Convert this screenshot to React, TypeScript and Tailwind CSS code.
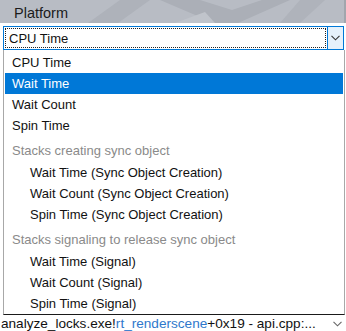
import React from "react";

type Row = { label: string; kind: "item" | "header"; indent?: boolean; selected?: boolean };

const rows: Row[] = [
  { label: "CPU Time", kind: "item" },
  { label: "Wait Time", kind: "item", selected: true },
  { label: "Wait Count", kind: "item" },
  { label: "Spin Time", kind: "item" },
  { label: "Stacks creating sync object", kind: "header" },
  { label: "Wait Time (Sync Object Creation)", kind: "item", indent: true },
  { label: "Wait Count (Sync Object Creation)", kind: "item", indent: true },
  { label: "Spin Time (Sync Object Creation)", kind: "item", indent: true },
  { label: "Stacks signaling to release sync object", kind: "header" },
  { label: "Wait Time (Signal)", kind: "item", indent: true },
  { label: "Wait Count (Signal)", kind: "item", indent: true },
  { label: "Spin Time (Signal)", kind: "item", indent: true },
];

function Chevron({ color = "#444" }: { color?: string }) {
  return (
    <svg width="9" height="6" viewBox="0 0 9 6" fill="none">
      <path d="M0.5 0.8 L4.5 4.8 L8.5 0.8" stroke={color} strokeWidth="1.1" />
    </svg>
  );
}

export default function App() {
  return (
    <div
      className="relative w-[346px] h-[331px] overflow-hidden bg-white text-[#111]"
      style={{ fontFamily: '"Liberation Sans", Arial, sans-serif' }}
    >
      {/* panel title bar */}
      <div className="relative h-[23px] bg-[#b8bcc4] overflow-hidden">
        <svg className="absolute inset-0" width="346" height="23" viewBox="0 0 346 23">
          <polygon points="88,23 120,0 150,0 118,23" fill="#aeb2ba" />
          <polygon points="160,0 200,0 232,10 262,0 290,0 238,23 214,23" fill="#abafb7" />
          <polygon points="175,23 205,12 215,23" fill="#c0c4cb" />
          <polygon points="300,0 325,0 300,23 280,23" fill="#afb3bb" />
          <rect x="344" y="0" width="2" height="23" fill="#a2a6ad" />
        </svg>
        <div className="relative pl-[14px] text-[14.5px] leading-[27px] text-[#1b1b1b]">Platform</div>
      </div>

      {/* combobox */}
      <div className="pt-[3px] pl-[3px]">
        <div className="flex h-[24px] w-[341px] border border-[#0078d7] bg-white">
          <div className="flex-1 p-[1px]">
            <div className="h-full border border-dotted border-[#222] pl-[3px] text-[13px] leading-[20px]">
              CPU Time
            </div>
          </div>
          <div className="flex w-[16px] items-center justify-center border-l border-[#0078d7] bg-[#e5f1fb]">
            <Chevron color="#333" />
          </div>
        </div>
      </div>

      {/* open dropdown list */}
      <div className="ml-[3px] w-[342px] border-l border-r border-b border-l-[#a8a8a8] border-r-[#a8a8a8] border-b-[#1a1a1a] pt-[2px] text-[13px]">
        {rows.map((row) =>
          row.kind === "header" ? (
            <div key={row.label} className="h-[26px] pt-[2px] pl-[8px] leading-[25px] text-[#8a8a8a]">
              {row.label}
            </div>
          ) : (
            <div
              key={row.label}
              className={`mx-[1px] h-[21px] leading-[22px] ${row.indent ? "pl-[25px]" : "pl-[7px]"} ${
                row.selected ? "bg-[#0078d7] text-white" : "text-[#111]"
              }`}
            >
              {row.label}
            </div>
          )
        )}
      </div>

      {/* row beneath the list */}
      <div className="flex h-[17px] items-center justify-between pl-[1px] pr-[4px] text-[13.6px] leading-[17px]">
        <span className="whitespace-nowrap">
          analyze_locks.exe!<span className="text-[#2f78cc]">rt_renderscene</span>+0x19 - api.cpp:...
        </span>
        <Chevron color="#666" />
      </div>
    </div>
  );
}
